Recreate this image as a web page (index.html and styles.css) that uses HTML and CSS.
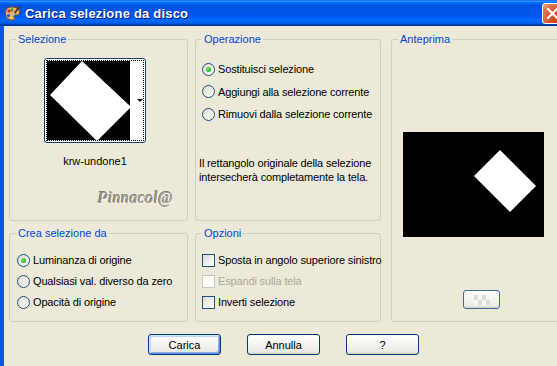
FILE: index.html
```html
<!DOCTYPE html>
<html lang="it">
<head>
    <meta charset="UTF-8">
    <title>Carica selezione da disco</title>
    <link rel="stylesheet" href="styles.css">
</head>
<body>
    <div class="window">
        <div class="titlebar">
            <svg class="app-icon" width="17" height="17" viewBox="0 0 17 17">
                <path d="M8 2 C3 2 1 5 1.5 9 C2 13 5 15.5 9 15 C11 14.7 11 13 10 12 C9 11 10 9.5 12 10 C14.5 10.5 16 9 15.5 6.5 C15 3.5 12 2 8 2 Z" fill="#e9b46a" stroke="#7a4a1c" stroke-width="1"/>
                <circle cx="5" cy="6" r="1.6" fill="#e02020"/>
                <circle cx="4.5" cy="10.5" r="1.6" fill="#2060e0"/>
                <circle cx="8" cy="5" r="1.4" fill="#20a030"/>
                <circle cx="7.5" cy="12.5" r="1.2" fill="#f0e020"/>
                <path d="M16 1 L10 9" stroke="#5a3a10" stroke-width="2"/>
                <path d="M10.5 8 L9 10.5" stroke="#c0c0c0" stroke-width="2"/>
            </svg>
            <span class="title">Carica selezione da disco</span>
            <span class="close">
                <svg width="13" height="13" viewBox="0 0 13 13">
                    <path d="M2 2 L11 11 M11 2 L2 11" stroke="#fff" stroke-width="2.2" stroke-linecap="square"/>
                </svg>
            </span>
        </div>

        <div class="client">
            <div class="groups">
                <fieldset class="group sel">
                    <legend>Selezione</legend>
                    <div class="thumb">
                        <div class="thumb-focus">
                            <svg width="83" height="79" viewBox="0 0 83 79">
                                <rect width="83" height="79" fill="#000"/>
                                <polygon points="35,0 3,34 50,80 84,46" fill="#fff"/>
                            </svg>
                            <div class="thumb-strip"><span class="thumb-arrow"></span></div>
                        </div>
                    </div>
                    <div class="thumb-name">krw-undone1</div>
                    <div class="watermark">Pinnacol@</div>
                </fieldset>

                <fieldset class="group op">
                    <legend>Operazione</legend>
                    <div class="choices op-choices">
                        <div class="choice"><span class="radio checked"></span>Sostituisci selezione</div>
                        <div class="choice"><span class="radio"></span>Aggiungi alla selezione corrente</div>
                        <div class="choice"><span class="radio"></span>Rimuovi dalla selezione corrente</div>
                    </div>
                    <p class="note">Il rettangolo originale della selezione<br>intersecherà completamente la tela.</p>
                </fieldset>

                <fieldset class="group preview">
                    <legend>Anteprima</legend>
                    <svg class="preview-img" width="141" height="105" viewBox="0 0 141 105">
                        <rect width="141" height="105" fill="#000"/>
                        <polygon points="97,18 71,44 107,80 133,54" fill="#fff"/>
                    </svg>
                    <span class="mini-btn">
                        <svg width="16" height="10" viewBox="0 0 16 10">
                            <rect width="16" height="10" fill="#f6f6f4"/>
                            <rect x="0" y="0" width="4" height="5" fill="#dcdcd8"/>
                            <rect x="8" y="0" width="4" height="5" fill="#dcdcd8"/>
                            <rect x="4" y="5" width="4" height="5" fill="#dcdcd8"/>
                            <rect x="12" y="5" width="4" height="5" fill="#dcdcd8"/>
                        </svg>
                    </span>
                </fieldset>

                <fieldset class="group source">
                    <legend>Crea selezione da</legend>
                    <div class="choices">
                        <div class="choice"><span class="radio checked"></span>Luminanza di origine</div>
                        <div class="choice"><span class="radio"></span>Qualsiasi val. diverso da zero</div>
                        <div class="choice"><span class="radio"></span>Opacità di origine</div>
                    </div>
                </fieldset>

                <fieldset class="group options">
                    <legend>Opzioni</legend>
                    <div class="choices">
                        <div class="choice"><span class="check"></span>Sposta in angolo superiore sinistro</div>
                        <div class="choice disabled"><span class="check"></span>Espandi sulla tela</div>
                        <div class="choice"><span class="check"></span>Inverti selezione</div>
                    </div>
                </fieldset>
            </div>

            <div class="actions">
                <button class="default">Carica</button>
                <button>Annulla</button>
                <button>?</button>
            </div>
        </div>
    </div>
</body>
</html>
```

FILE: styles.css
```css
body {
    margin: 0;
    overflow: hidden;
    background-color: #ece9d8;
    font-family: 'Liberation Sans', Arial, sans-serif;
    font-size: 11px;
    color: #000;
}
.window {
    width: 570px;
    height: 366px;
}
.titlebar {
    height: 26px;
    display: flex;
    align-items: center;
    background: linear-gradient(to bottom, #0058ee 0%, #3a93ff 4%, #288eff 6%, #127dff 8%, #036ffc 10%, #0262ee 14%, #0057e5 20%, #0054e3 24%, #0055eb 56%, #005bf5 66%, #026afe 76%, #0062ef 86%, #0052d6 92%, #0040ab 94%, #003092 100%);
}
.app-icon {
    margin-left: 4px;
    margin-right: 4px;
}
.title {
    color: #fff;
    font-weight: bold;
    font-size: 13px;
    letter-spacing: 0.2px;
    text-shadow: 1px 1px #0a1883;
    flex: 1;
}
.close {
    width: 19px;
    height: 19px;
    margin-right: 7px;
    border: 1px solid #fff;
    border-radius: 3px;
    display: flex;
    align-items: center;
    justify-content: center;
    background: radial-gradient(circle at 85% 85%, #c43a12 0%, #d9552a 45%, #e2774f 75%, #f0a080 100%);
}
.client {
    height: 340px;
    border-left: 4px solid #0a57e8;
}
.groups {
    display: grid;
    grid-template-columns: 179px 186px 1fr;
    grid-template-rows: 188px 95px;
    column-gap: 7px;
    row-gap: 6px;
    padding: 7px 0 0 5px;
}
.group {
    margin: 0;
    padding: 0;
    min-width: 0;
    border: 1px solid #d0d0bf;
    border-radius: 3px;
}
.group legend {
    margin-left: 6px;
    padding: 0 2px;
    line-height: 13px;
    color: #0046d5;
}
.preview {
    grid-column: 3;
    grid-row: 1 / 3;
    margin-left: 3px;
}
.sel { grid-column: 1; grid-row: 1; }
.op { grid-column: 2; grid-row: 1; }
.source { grid-column: 1; grid-row: 2; }
.options { grid-column: 2; grid-row: 2; }

.thumb {
    width: 98px;
    height: 81px;
    margin: 12px 0 0 34px;
    padding: 1px;
    border: 1px solid #1f3f6f;
    border-radius: 3px;
    background-color: #fff;
}
.thumb-focus {
    display: flex;
    height: 79px;
    border: 1px dotted #000;
}
.thumb-strip {
    flex: 1;
    position: relative;
    background-color: #fff;
}
.thumb-arrow {
    position: absolute;
    left: 7px;
    top: 38px;
    border-left: 3px solid transparent;
    border-right: 3px solid transparent;
    border-top: 3px solid #000;
}
.thumb-name {
    width: 102px;
    margin: 12px 0 0 34px;
    text-align: center;
    line-height: 13px;
}
.watermark {
    margin: 21px 0 0 88px;
    font-family: 'Liberation Serif', serif;
    font-style: italic;
    font-size: 16px;
    color: #96948a;
    text-shadow: 1px 1px #fbfaf4, -1px -1px #76746a;
    letter-spacing: 0.3px;
}

.choices {
    display: flex;
    flex-direction: column;
    gap: 5px;
    padding: 12px 0 0 6px;
}
.op-choices {
    padding-top: 15px;
    gap: 6.5px;
}
.source .choices {
    padding-left: 7px;
}
.choice {
    display: flex;
    align-items: center;
    gap: 3px;
    height: 16px;
    white-space: nowrap;
    letter-spacing: -0.15px;
}
.choice.disabled {
    color: #aca899;
}
.radio {
    flex-shrink: 0;
    width: 11px;
    height: 11px;
    border: 1px solid #1c5180;
    border-radius: 50%;
    background: linear-gradient(135deg, #dcd8cb, #fff);
    display: flex;
    align-items: center;
    justify-content: center;
}
.radio.checked::after {
    content: "";
    width: 5px;
    height: 5px;
    border-radius: 50%;
    background: radial-gradient(circle at 35% 35%, #6ce86a, #13a013);
}
.check {
    flex-shrink: 0;
    width: 11px;
    height: 11px;
    border: 1px solid #1c5180;
    background: linear-gradient(135deg, #dcdcd7, #fff);
}
.disabled .check {
    border-color: #cac8bb;
    background: #fff;
}
.note {
    margin: 34px 0 0 3px;
    line-height: 14px;
    letter-spacing: -0.15px;
}

.preview-img {
    display: block;
    margin: 86px 0 0 11px;
}
.mini-btn {
    display: flex;
    align-items: center;
    justify-content: center;
    width: 35px;
    height: 17px;
    margin: 53px 0 0 71px;
    border: 1px solid #3c6a9a;
    border-radius: 3px;
    background: linear-gradient(#fff, #ecebe6 86%, #d6d0c5);
}

.actions {
    display: flex;
    gap: 26px;
    margin-top: 12px;
    padding-left: 144px;
}
button {
    width: 73px;
    height: 21px;
    padding: 0;
    border: 1px solid #003c74;
    border-radius: 3px;
    background: linear-gradient(#fff 0%, #f4f3ee 50%, #ecebe6 86%, #d6d0c5 100%);
    font-family: 'Liberation Sans', Arial, sans-serif;
    font-size: 11px;
    color: #000;
}
button.default {
    box-shadow: inset 1px 1px #cee7ff, inset -1px -1px #6982ee, inset 2px 2px #bcd4f6, inset -2px -2px #89ade4;
}
```
